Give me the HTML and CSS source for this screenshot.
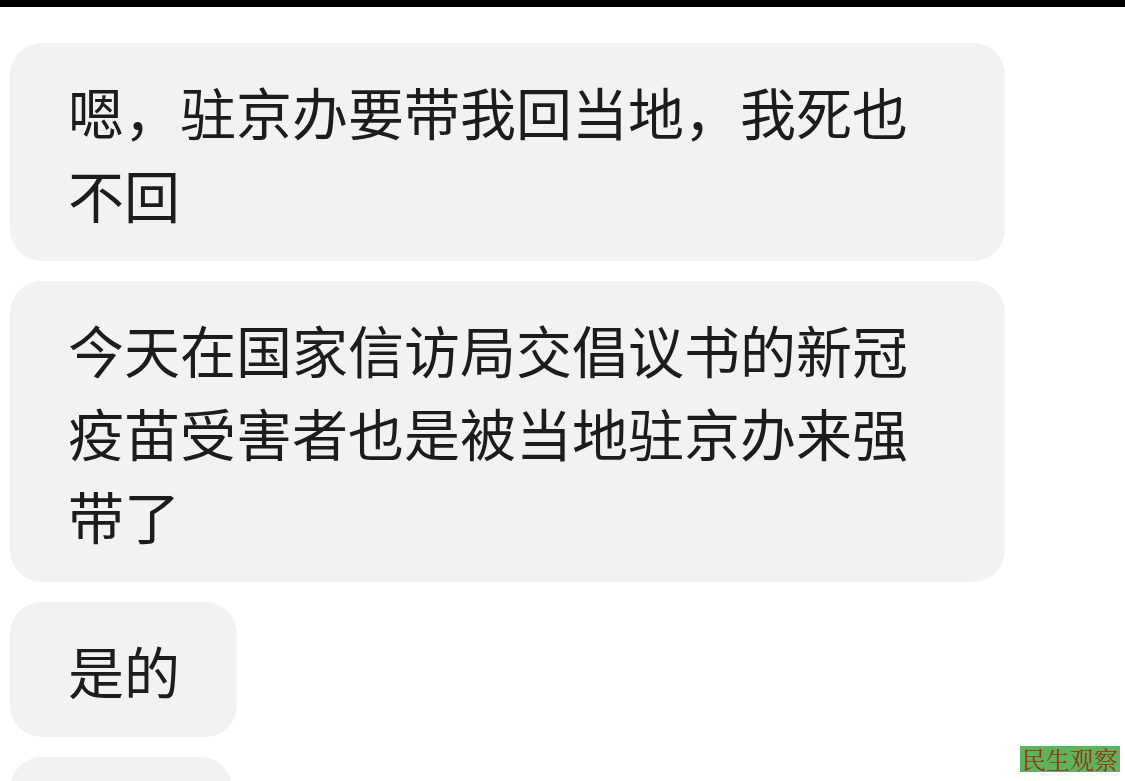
FILE: index.html
```html
<!DOCTYPE html>
<html lang="zh-CN">
<head>
  <meta charset="UTF-8">
  <title>聊天记录</title>
  <link rel="stylesheet" href="styles.css">
</head>
<body>
<div class="top-bar"></div>
<div class="chat">
  <div class="bubble">嗯，驻京办要带我回当地，我死也不回</div>
  <div class="bubble">今天在国家信访局交倡议书的新冠疫苗受害者也是被当地驻京办来强带了</div>
  <div class="bubble">是的</div>
  <div class="bubble bubble-stub"></div>
</div>
<div class="watermark">民生观察</div>
</body>
</html>
```

FILE: styles.css
```css
html, body {
  margin: 0;
  padding: 0;
  height: 100%;
  overflow: hidden;
  background: #ffffff;
}
body {
  font-family: "Noto Sans CJK SC", "Noto Sans", sans-serif;
  color: #1c1c1c;
}
.top-bar {
  height: 7px;
  background: #000000;
}
.chat {
  display: flex;
  flex-direction: column;
  align-items: flex-start;
  gap: 20px;
  padding-top: 36px;
  padding-left: 10px;
}
.bubble {
  box-sizing: border-box;
  max-width: 995px;
  padding: 26px 57px 26px 58px;
  background: #f2f2f3;
  border-radius: 32px;
  font-size: 56px;
  line-height: 83px;
}
.bubble-stub {
  width: 222px;
  height: 132px;
}
.watermark {
  position: absolute;
  left: 1020px;
  top: 746px;
  width: 100px;
  height: 26px;
  background: #5cb55c;
  color: #9a3012;
  font-family: "Noto Serif CJK SC", "Liberation Serif", "Noto Sans CJK SC", serif;
  font-size: 24px;
  line-height: 26px;
  text-align: center;
}
```
